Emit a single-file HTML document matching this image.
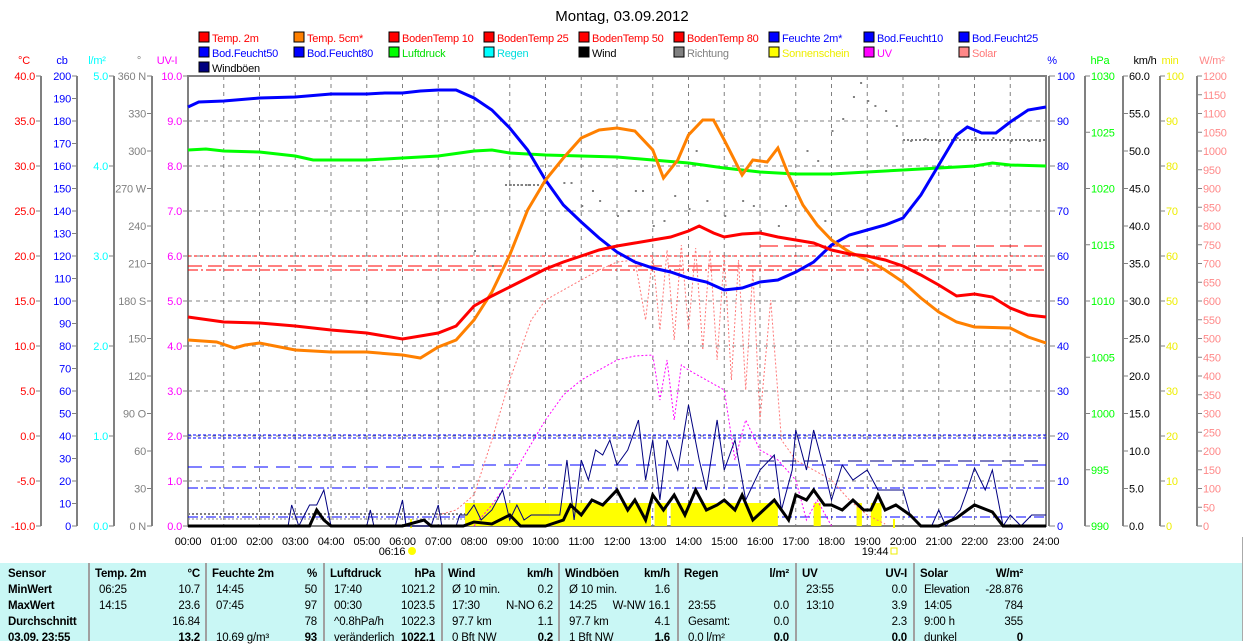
<!DOCTYPE html><html><head><meta charset="utf-8"><style>
body{margin:0;background:#fff;width:1250px;height:641px;overflow:hidden;font-family:"Liberation Sans",sans-serif}
svg{position:absolute;left:0;top:0}
.tb{position:absolute;left:0;top:563px;width:1242px;height:78px;background:#c9f7f5;font-size:11.5px;letter-spacing:-0.2px}
.c{position:absolute;white-space:nowrap}
.b{font-weight:bold}
.sep{position:absolute;top:0;width:2px;height:78px;background:#a0a0a0}
</style></head><body>
<svg id="s" width="1250" height="563" font-family="Liberation Sans, sans-serif" font-size="11" letter-spacing="-0.2"></svg>
<div class="tb" id="tb"></div>
<div style="position:absolute;left:1242px;top:537px;width:8px;height:104px;background:#fff;border-left:1px solid #aaa"></div>
<script>
const s=document.getElementById('s');let h='';
const X=t=>188+t*35.75;
h+=`<text x="622" y="21" text-anchor="middle" font-size="15" letter-spacing="0">Montag, 03.09.2012</text>`;
const L=[["Temp. 2m","#f00","#f00"],["Temp. 5cm*","#ff8000","#f00"],["BodenTemp 10","#f00","#f00"],["BodenTemp 25","#f00","#f00"],["BodenTemp 50","#f00","#f00"],["BodenTemp 80","#f00","#f00"],["Feuchte 2m*","#00f","#00f"],["Bod.Feucht10","#00f","#00f"],["Bod.Feucht25","#00f","#00f"],
["Bod.Feucht50","#00f","#00f"],["Bod.Feucht80","#00f","#00f"],["Luftdruck","#0f0","#0d0"],["Regen","#0ff","#0dd"],["Wind","#000","#000"],["Richtung","#808080","#808080"],["Sonnenschein","#ff0","#ee0"],["UV","#f0f","#f0f"],["Solar","#f88","#f77"],["Windböen","#000080","#000"]];
L.forEach((l,i)=>{const r=Math.floor(i/9),c=i%9,x=199+c*95,y=32+r*15;h+=`<rect x="${x}" y="${y}" width="10" height="10" fill="${l[1]}" stroke="#000"/><text x="${x+13}" y="${y+10}" fill="${l[2]}">${l[0]}</text>`});
for(let i=1;i<24;i++)h+=`<line x1="${X(i)}" y1="76" x2="${X(i)}" y2="526" stroke="#808080" stroke-dasharray="4,4"/>`;
for(let i=1;i<10;i++)h+=`<line x1="188" y1="${76+i*45}" x2="1046" y2="${76+i*45}" stroke="#808080" stroke-dasharray="4,4"/>`;
h+=`<path d="M188 76H1046V526H188Z" fill="none" stroke="#808080" stroke-width="2"/><line x1="1049" y1="76" x2="1049" y2="526" stroke="#808080" stroke-width="2"/>`;
for(let i=0;i<=24;i++)h+=`<text x="${X(i)}" y="545" text-anchor="middle">${String(i).padStart(2,'0')}:00</text>`;
h+=`<text x="392" y="555" text-anchor="middle">06:16</text><circle cx="412" cy="551" r="4" fill="#ff0"/><line x1="411" y1="519" x2="411" y2="528" stroke="#ff0" stroke-width="2"/>`;
h+=`<text x="875" y="555" text-anchor="middle">19:44</text><rect x="891" y="548" width="6" height="6" fill="none" stroke="#ee0"/><line x1="894" y1="519" x2="894" y2="528" stroke="#ff0" stroke-width="2"/>`;
function ax(lx,hdr,hc,col,vals,left){const n=vals.length-1;h+=`<line x1="${lx}" y1="76" x2="${lx}" y2="526" stroke="#808080" stroke-width="2"/>`;h+=`<text x="${hc}" y="64" text-anchor="middle" fill="${col}">${hdr}</text>`;
vals.forEach((v,i)=>{const y=76+i*450/n;if(v===null)return;if(left){h+=`<line x1="${lx-5}" y1="${y}" x2="${lx}" y2="${y}" stroke="#808080"/><text x="${lx-6}" y="${y+4}" text-anchor="end" fill="${col}">${v}</text>`}else{h+=`<line x1="${lx}" y1="${y}" x2="${lx+5}" y2="${y}" stroke="#808080"/><text x="${lx+6}" y="${y+4}" fill="${col}">${v}</text>`}})}
const rng=(a,b,st,d)=>{const r=[];for(let v=a;st>0?v<=b+1e-9:v>=b-1e-9;v+=st)r.push(d?v.toFixed(d):String(v));return r};
ax(41,"°C",24,"#f00",rng(40,-10,-5,1),1);
ax(77,"cb",62,"#00f",rng(200,0,-10),1);
ax(114,"l/m²",97,"#0ff",rng(5,0,-1,1),1);
ax(152,"°",139,"#808080",["360 N","330","300","270 W","240","210","180 S","150","120","90 O","60","30","0 N"],1);
h+=`<text x="167" y="64" text-anchor="middle" fill="#f0f">UV-I</text>`;rng(10,0,-1,1).forEach((v,i)=>{const y=76+i*45;h+=`<line x1="183" y1="${y}" x2="188" y2="${y}" stroke="#808080"/><text x="182" y="${y+4}" text-anchor="end" fill="#f0f">${v}</text>`});
h+=`<text x="1052" y="64" text-anchor="middle" fill="#00f">%</text>`;rng(100,0,-10).forEach((v,i)=>{const y=76+i*45;h+=`<line x1="1049" y1="${y}" x2="1055" y2="${y}" stroke="#808080"/><text x="1057" y="${y+4}" fill="#00f">${v}</text>`});
ax(1085,"hPa",1100,"#0f0",[1030,null,null,null,1025,null,null,null,1020,null,null,null,1015,null,null,null,1010,null,null,null,1005,null,null,null,1000,null,null,null,995,null,null,null,990],0);
ax(1123,"km/h",1145,"#000",rng(60,0,-5,1),0);
ax(1160,"min",1170,"#ee0",rng(100,0,-10),0);
ax(1197,"W/m²",1212,"#f88",rng(1200,0,-50),0);
const P=(a,col,w,da)=>{h+=`<polyline fill="none" stroke="${col}" stroke-width="${w}" ${da?`stroke-dasharray="${da}"`:''} points="${a.map(p=>X(p[0])+','+p[1]).join(' ')}"/>`};
h+=`<line x1="188" y1="435" x2="1046" y2="435" stroke="#00f" stroke-dasharray="3,2"/><line x1="188" y1="438" x2="1046" y2="438" stroke="#00f" stroke-dasharray="3,2"/>`;
h+=`<line x1="188" y1="467" x2="460" y2="467" stroke="#00f" stroke-dasharray="14,8"/><line x1="460" y1="465" x2="1046" y2="465" stroke="#00f" stroke-dasharray="14,8"/><line x1="760" y1="461" x2="1046" y2="461" stroke="#000080" stroke-dasharray="14,8"/>`;
h+=`<line x1="188" y1="488" x2="1046" y2="488" stroke="#00f" stroke-dasharray="10,3,2,3"/><line x1="188" y1="517" x2="1046" y2="517" stroke="#00f" stroke-dasharray="10,3,2,3"/>`;
h+=`<line x1="188" y1="514" x2="470" y2="514" stroke="#808080" stroke-width="2" stroke-dasharray="2,2"/><line x1="188" y1="519" x2="470" y2="519" stroke="#808080" stroke-dasharray="2,2"/>`;
h+=`<line x1="188" y1="256" x2="1046" y2="256" stroke="#f00" stroke-dasharray="3,3"/><line x1="188" y1="266" x2="1046" y2="266" stroke="#f00" stroke-dasharray="14,6"/><line x1="188" y1="270" x2="1046" y2="270" stroke="#f00" stroke-dasharray="10,3,2,3"/><line x1="760" y1="246" x2="1046" y2="246" stroke="#f00" stroke-dasharray="18,6"/>`;
[[7.75,10.1],[10.1,12.95],[13.05,13.4],[13.5,16.5],[17.5,17.7],[18.7,18.85],[19.1,19.4]].forEach(r=>h+=`<rect x="${X(r[0])}" y="503" width="${X(r[1])-X(r[0])}" height="23" fill="#ff0"/>`);
const rd=[[9.0,184],[9.3,184],[9.5,184],[10.5,182],[10.7,182],[11,205],[11.3,190],[11.5,200],[12,215],[12.3,210],[12.7,190],[13,225],[13.3,220],[13.6,195],[14,208],[14.5,200],[15,215],[15.5,200],[16,230],[16.5,225],[17,185],[17.3,150],[17.6,160],[18,130],[18.3,118],[18.6,96],[18.8,82],[19,100],[19.2,105],[19.5,110],[19.8,125],[20.2,140],[20.6,138],[21,140],[21.5,137],[22,137],[22.5,137],[23,140],[23.5,140],[23.8,140],[8,250],[8.5,265],[12.5,190],[14.2,150],[15.8,205],[16.7,205],[17.8,220]];
rd.forEach(p=>h+=`<rect x="${X(p[0])}" y="${p[1]}" width="2" height="2" fill="#808080"/>`);
h+=`<line x1="903" y1="140" x2="1046" y2="140" stroke="#808080" stroke-width="2" stroke-dasharray="2,2"/><line x1="505" y1="185" x2="545" y2="185" stroke="#808080" stroke-width="2" stroke-dasharray="2,2"/>`;
P([[7,515],[7.5,510],[8,495],[8.5,440],[9,380],[9.3,350],[9.6,320],[10,300],[10.5,290],[11,280],[11.5,270],[12,262],[12.5,260],[12.8,320],[13,255],[13.2,330],[13.4,250],[13.6,340],[13.8,245],[14,330],[14.2,248],[14.4,350],[14.6,250],[14.8,360],[15,255],[15.2,380],[15.4,260],[15.6,390],[15.8,270],[16,420],[16.3,300],[16.6,440],[17,460],[17.5,470],[18,480],[18.5,500],[19,515],[19.5,524]],"#f77",1,"2,2");
P([[8,526],[8.5,505],[9,480],[9.5,450],[10,420],[10.5,395],[11,380],[11.5,370],[12,360],[12.5,356],[13,355],[13.2,400],[13.4,360],[13.6,420],[13.8,365],[14,370],[14.5,380],[15,390],[15.3,460],[15.6,420],[16,450],[16.5,460],[17,480],[17.3,520],[17.6,500],[18,526]],"#f0f",1,"2,2");
P([[0,526],[2.8,526],[2.9,505],[3.1,526],[3.4,505],[3.6,505],[3.8,490],[4,526],[5,526],[5.1,510],[5.2,526],[5.8,526],[6,500],[6.1,526],[6.8,526],[7,505],[7.1,526],[7.5,526],[7.6,515],[7.8,515],[8,505],[8.2,520],[8.5,510],[8.8,490],[9,520],[9.2,505],[9.4,520],[9.6,515],[10,515],[10.4,515],[10.6,460],[10.8,520],[11,460],[11.2,480],[11.4,450],[11.6,455],[11.8,440],[12,465],[12.3,450],[12.6,420],[12.8,480],[13,440],[13.2,500],[13.4,440],[13.7,470],[14,405],[14.3,460],[14.5,490],[14.8,420],[15,470],[15.3,440],[15.6,500],[16,470],[16.4,455],[16.6,510],[16.9,470],[17,430],[17.3,470],[17.5,430],[17.8,470],[18,500],[18.3,465],[18.6,480],[19,470],[19.3,490],[19.6,490],[20,490],[20.2,515],[20.5,526],[20.8,526],[21,510],[21.2,526],[21.6,510],[21.8,490],[22,468],[22.3,490],[22.5,470],[22.8,526],[23,515],[23.3,526],[23.6,515],[24,515]],"#000080",1);
P([[0,526],[3.4,526],[3.6,510],[3.8,520],[4,526],[6,526],[6.6,520],[6.8,526],[7.7,526],[8,522],[8.5,524],[9,515],[9.3,526],[10,526],[10.5,520],[10.7,505],[11,515],[11.3,500],[11.6,505],[12,490],[12.3,510],[12.5,500],[12.8,520],[13,495],[13.3,510],[13.6,495],[13.9,515],[14.2,490],[14.5,510],[14.8,505],[15,500],[15.3,510],[15.5,495],[15.8,520],[16.1,510],[16.4,500],[16.8,520],[17,495],[17.3,500],[17.5,490],[17.8,505],[18,505],[18.3,510],[18.6,500],[18.9,510],[19.1,510],[19.3,495],[19.5,510],[19.8,505],[20.2,515],[20.5,526],[21,526],[21.5,518],[21.8,510],[22,505],[22.5,512],[22.8,526],[24,526]],"#000",3);
P([[0,150],[0.5,149],[1,151],[2,152],[2.5,154],[3,156],[3.5,160],[4,160],[5,160],[6,158],[7,156],[8,151],[8.5,150],[9,153],[10,155],[11,156],[12,157],[13,160],[14,163],[15,168],[16,172],[17,174],[18,174],[19,172],[20,170],[21,168],[22,166],[22.5,163],[23,165],[24,166]],"#0f0",3);
P([[0,107],[0.3,102],[1,101],[2,98],[3,97],[4,94],[5,94],[5.5,93],[6,93],[6.5,91],[7,90],[7.5,90],[8,98],[8.5,110],[9,128],[9.5,150],[10,180],[10.5,205],[11,222],[11.5,238],[12,252],[12.5,262],[13,268],[13.5,272],[14,278],[14.5,282],[15,290],[15.5,288],[16,282],[16.5,280],[17,272],[17.5,262],[18,245],[18.5,235],[19,230],[19.5,225],[20,218],[20.5,195],[21,165],[21.5,135],[21.8,127],[22.2,133],[22.6,133],[23,122],[23.5,110],[24,107]],"#00f",3);
P([[0,340],[0.8,342],[1.3,348],[1.6,345],[2,343],[3,350],[4,352],[5,352],[6,355],[6.5,358],[7,347],[7.5,340],[8,320],[8.5,292],[9,255],[9.5,210],[10,180],[10.5,158],[11,138],[11.5,130],[12,128],[12.5,131],[13,150],[13.3,178],[13.7,160],[14,135],[14.4,120],[14.7,120],[15,140],[15.5,175],[15.8,160],[16.2,162],[16.5,148],[16.8,175],[17.2,205],[17.6,225],[18,240],[18.5,252],[19,260],[19.5,270],[20,282],[20.5,298],[21,312],[21.5,322],[22,327],[23,328],[23.5,337],[24,343]],"#ff8000",3);
P([[0,317],[1,322],[2,323],[3,326],[4,330],[5,333],[6,339],[7,333],[7.5,326],[8,306],[8.5,296],[9,287],[9.5,278],[10,269],[10.5,262],[11,256],[11.5,250],[12,246],[12.5,243],[13,240],[13.5,237],[14,231],[14.3,226],[14.7,233],[15,237],[15.5,234],[16,233],[16.5,237],[17,240],[17.5,243],[18,250],[18.5,254],[19,256],[19.5,260],[20,266],[20.5,275],[21,285],[21.5,296],[22,294],[22.5,297],[23,308],[23.5,315],[24,317]],"#f00",3);
s.innerHTML=h;
const tb=document.getElementById('tb');let t='';
[88,205,323,441,558,677,795,913].forEach(x=>t+=`<div class="sep" style="left:${x}px"></div>`);
const C=(x,y,txt,b,r)=>t+=`<div class="c${b?' b':''}" style="${r?`right:${1242-x}px`:`left:${x}px`};top:${y}px">${txt}</div>`;
const ys=[5,21,37,53,69];
["Sensor","MinWert","MaxWert","Durchschnitt","03.09. 23:55"].forEach((v,i)=>C(8,ys[i],v,1));
const cols=[
[95,200,"Temp. 2m","°C",["06:25","10.7"],["14:15","23.6"],["","16.84"],["","13.2"]],
[212,317,"Feuchte 2m","%",["14:45","50"],["07:45","97"],["","78"],["10.69 g/m³","93"]],
[330,435,"Luftdruck","hPa",["17:40","1021.2"],["00:30","1023.5"],["^0.8hPa/h","1022.3"],["veränderlich","1022.1"]],
[448,553,"Wind","km/h",["Ø 10 min.","0.2"],["17:30","N-NO 6.2"],["97.7 km","1.1"],["0 Bft NW","0.2"]],
[565,670,"Windböen","km/h",["Ø 10 min.","1.6"],["14:25","W-NW 16.1"],["97.7 km","4.1"],["1 Bft NW","1.6"]],
[684,789,"Regen","l/m²",["",""],["23:55","0.0"],["Gesamt:","0.0"],["0.0 l/m²","0.0"]],
[802,907,"UV","UV-I",["23:55","0.0"],["13:10","3.9"],["","2.3"],["","0.0"]],
[920,1023,"Solar","W/m²",["Elevation","-28.876"],["14:05","784"],["9:00 h","355"],["dunkel","0"]]];
cols.forEach(c=>{C(c[0],ys[0],c[2],1);C(c[1],ys[0],c[3],1,1);for(let i=0;i<4;i++){C(c[0]+4,ys[i+1],c[4+i][0],0);C(c[1],ys[i+1],c[4+i][1],i==3,1)}});
tb.innerHTML=t;
</script></body></html>
